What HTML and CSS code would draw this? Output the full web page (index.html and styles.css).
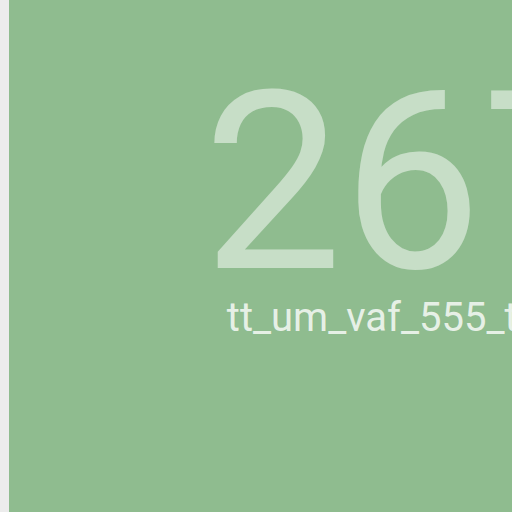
FILE: index.html
```html
<!DOCTYPE html>
<html>
<head>
<meta charset="utf-8">
<link rel="stylesheet" href="styles.css">
</head>
<body>
<div class="page">
  <div class="tile">
    <div class="stack">
      <div class="count">267</div>
      <div class="name">tt_um_vaf_555_timer</div>
    </div>
  </div>
</div>
</body>
</html>
```
FILE: styles.css
```css
html, body {
  margin: 0;
  padding: 0;
  width: 512px;
  height: 512px;
  overflow: hidden;
  background: #ececec;
}
.page {
  display: flex;
  height: 512px;
  padding-left: 9px;
}
.tile {
  flex: 0 0 806px;
  height: 512px;
  background: #8fbc8f;
  font-family: Roboto, "Liberation Sans", sans-serif;
}
.stack {
  display: flex;
  flex-direction: column;
  align-items: center;
  padding-top: 70px;
  white-space: nowrap;
}
.count {
  font-size: 248px;
  line-height: 228px;
  color: rgba(255, 255, 255, 0.5);
}
.name {
  font-size: 40px;
  line-height: 40px;
  color: rgba(255, 255, 255, 0.8);
}
```
